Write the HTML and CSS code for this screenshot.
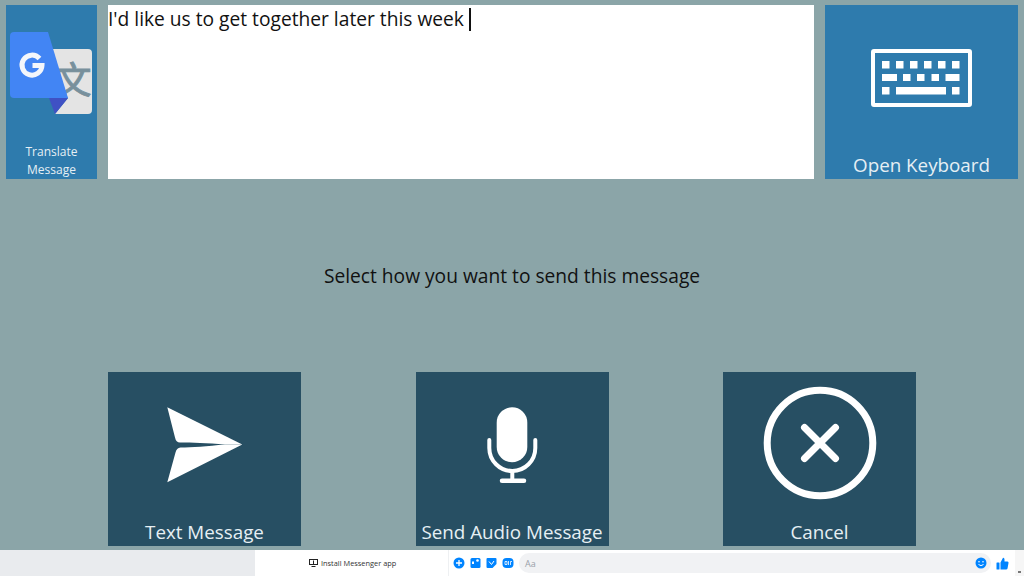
FILE: index.html
```html
<!DOCTYPE html>
<html lang="en">
<head>
<meta charset="utf-8">
<title>Send message</title>
<link rel="stylesheet" href="styles.css">
</head>
<body>
<main class="app">
  <section class="top">
    <div class="tile tile-blue tile-translate">
      <svg class="ic-translate" width="82" height="82" viewBox="0 0 82 82">
        <path d="M30 17H78Q82 17 82 21V78Q82 82 78 82H45L58 66Z" fill="#e4e4e4"/>
        <text class="wen" x="63" y="62" text-anchor="middle">文</text>
        <path d="M4 0H38L58 66H4Q0 66 0 62V4Q0 0 4 0Z" fill="#4285f4"/>
        <path d="M39 66H58L45 82Z" fill="#3f51c4"/>
        <path d="M29.500 26.500A10 10 0 1 0 32 33.500H22.500" fill="none" stroke="#f3f6fb" stroke-width="5"/>
      </svg>
      <span class="label label-small">Translate<br>Message</span>
    </div>
    <div class="message"><span class="message-text">I'd like us to get together later this week</span><span class="caret"></span></div>
    <div class="tile tile-blue tile-keyboard">
      <svg class="ic-keyboard" width="101" height="58" viewBox="0 0 101 58" fill="#fff">
        <rect x="2" y="2" width="97" height="54" rx="1" fill="none" stroke="#fff" stroke-width="4"/>
        <rect x="11" y="12" width="7.500" height="7.500"/><rect x="25" y="12" width="7.500" height="7.500"/><rect x="39" y="12" width="7.500" height="7.500"/><rect x="53" y="12" width="7.500" height="7.500"/><rect x="67" y="12" width="7.500" height="7.500"/><rect x="81" y="12" width="7.500" height="7.500"/>
        <rect x="11" y="25" width="15" height="7"/><rect x="32" y="25" width="7.500" height="7"/><rect x="46" y="25" width="7.500" height="7"/><rect x="60.500" y="25" width="7.500" height="7"/><rect x="74.500" y="25" width="14" height="7"/>
        <rect x="11" y="38" width="7.500" height="7.500"/><rect x="25" y="38" width="50" height="7.500"/><rect x="81" y="38" width="7.500" height="7.500"/>
      </svg>
      <span class="label">Open Keyboard</span>
    </div>
  </section>

  <p class="prompt">Select how you want to send this message</p>

  <section class="choices">
    <div class="tile tile-dark">
      <svg class="ic-send" width="76" height="76" viewBox="0 0 76 76" fill="#fff">
        <path d="M0.300 0.300L75.300 37.400H58C40 36 25 35.500 13 35.500Q9 35.500 8 30.500Z"/>
        <path d="M0.300 75.300L75.300 37.400H58C40 39 25 40.500 13.500 40.500Q9.500 41 8.500 45.500Z"/>
      </svg>
      <span class="label">Text Message</span>
    </div>
    <div class="tile tile-dark">
      <svg class="ic-mic" width="52" height="78" viewBox="0 0 52 78" fill="none" stroke="#fff" stroke-width="4" stroke-linecap="round">
        <rect x="10.700" y="1.300" width="30.600" height="55" rx="15.300" fill="#fff" stroke="none"/>
        <path d="M3.300 34V42A23 23 0 0 0 49.300 42V34"/>
        <path d="M26.300 65V74"/>
        <path d="M16 74.700H38" stroke-width="4.500"/>
      </svg>
      <span class="label">Send Audio Message</span>
    </div>
    <div class="tile tile-dark">
      <svg class="ic-cancel" width="114" height="114" viewBox="0 0 114 114" fill="none" stroke="#fff" stroke-linecap="round">
        <circle cx="57" cy="57" r="52.800" stroke-width="7"/>
        <path d="M41.500 41.500L72.500 72.500M72.500 41.500L41.500 72.500" stroke-width="7"/>
      </svg>
      <span class="label">Cancel</span>
    </div>
  </section>
</main>

<footer class="chatbar">
  <div class="chat-side"></div>
  <div class="chat-install">
    <svg width="9" height="8" viewBox="0 0 9 8" fill="none" stroke="#222"><rect x="0.500" y="0.500" width="8" height="5"/><path d="M2.500 7.500H6.500M4.500 1.500V5" /></svg>
    <span>Install Messenger app</span>
  </div>
  <div class="chat-compose">
    <svg class="tool" width="12" height="12" viewBox="0 0 12 12"><circle cx="6" cy="6" r="5.500" fill="#0084ff"/><path d="M6 3V9M3 6H9" stroke="#fff" stroke-width="1.300"/></svg>
    <svg class="tool" width="11" height="12" viewBox="0 0 11 12"><rect x="0.500" y="1" width="10" height="10" rx="1.500" fill="#0084ff"/><circle cx="7.500" cy="3.500" r="1.300" fill="#fff"/><path d="M2 4.500H4V7H2Z" fill="#fff"/></svg>
    <svg class="tool" width="11" height="12" viewBox="0 0 11 12"><path d="M1.500 1H9.500Q10.500 1 10.500 2V7L6.500 11H1.500Q0.500 11 0.500 10V2Q0.500 1 1.500 1Z" fill="#0084ff"/><path d="M3 4.500L5.500 7.500L8 4" stroke="#fff" fill="none"/></svg>
    <svg class="tool" width="12" height="12" viewBox="0 0 12 12"><rect x="0.500" y="1" width="11" height="10" rx="4" fill="#0084ff"/><path d="M3 4.500H5V7.500H3ZM6.500 4V8M8.500 8V4.500H10" stroke="#fff" fill="none" stroke-width="0.800"/></svg>
    <div class="pill">
      <span class="pill-hint">Aa</span>
      <svg width="12" height="12" viewBox="0 0 12 12"><circle cx="6" cy="6" r="5.500" fill="#0084ff"/><circle cx="4" cy="4.800" r="0.800" fill="#fff"/><circle cx="8" cy="4.800" r="0.800" fill="#fff"/><path d="M3.500 7.500Q6 9.800 8.500 7.500" stroke="#fff" fill="none"/></svg>
    </div>
    <svg class="thumb" width="13" height="13" viewBox="0 0 13 13" fill="#0084ff"><rect x="0.500" y="5.500" width="3" height="7" rx="0.500"/><path d="M4.500 5.500L7 0.700Q8.500 0.500 8.500 2.500V4.500H11.500Q12.800 4.500 12.500 6L11.500 11.500Q11.300 12.500 10 12.500H4.500Z"/></svg>
  </div>
  <div class="chat-scroll"><span class="scroll-mark"></span></div>
</footer>
</body>
</html>
```

FILE: styles.css
```css
* { box-sizing: border-box; }

html, body {
  margin: 0;
  padding: 0;
  height: 576px;
  overflow: hidden;
}

body {
  display: flex;
  flex-direction: column;
  font-family: "Open Sans", "Noto Sans", sans-serif;
  background: #8ba5a8;
}

.app {
  height: 550px;
  display: flex;
  flex-direction: column;
  background: #8ba5a8;
  padding-top: 5px;
}

.top {
  display: flex;
  gap: 11px;
  height: 174px;
  padding: 0 6px;
}

.tile {
  display: flex;
  flex-direction: column;
  align-items: center;
  width: 193px;
  height: 174px;
  color: #e6eff4;
  flex: none;
}

.tile-blue { background: #2e7bad; }
.tile-dark { background: #274f63; }

.tile-translate { width: 91px; }

.label {
  margin-top: auto;
  font-size: 18.8px;
  line-height: 26px;
  white-space: nowrap;
  padding-bottom: 1px;
}

.label-small {
  font-size: 12px;
  line-height: 18px;
  text-align: center;
  padding-bottom: 0;
}

.message {
  flex: 1;
  background: #fff;
  color: #111;
  font-size: 19.2px;
  line-height: 27px;
  white-space: nowrap;
}

.caret {
  display: inline-block;
  width: 2px;
  height: 23px;
  margin-left: 5px;
  background: #111;
  vertical-align: top;
  margin-top: 3px;
}

.wen {
  font-family: "Noto Sans CJK SC", sans-serif;
  font-size: 37px;
  fill: #78909c;
  stroke: #78909c;
  stroke-width: 0.8px;
}

.ic-translate { margin-top: 27px; margin-right: 1px; }
.ic-keyboard { margin-top: 44px; }
.ic-send { margin-top: 35px; margin-left: 1px; }
.ic-mic { margin-top: 34px; }
.ic-cancel { margin-top: 14px; }

.prompt {
  flex: 1;
  margin: 0;
  display: flex;
  align-items: center;
  justify-content: center;
  font-size: 19.2px;
  color: #111;
}

.choices {
  display: flex;
  justify-content: space-between;
  padding: 0 108px;
  margin-bottom: 4px;
}

.chatbar {
  height: 26px;
  display: flex;
  background: #fff;
  flex: none;
}

.chat-side {
  width: 255px;
  background: #e9ebee;
}

.chat-install {
  width: 194px;
  display: flex;
  align-items: center;
  gap: 3px;
  padding-left: 54px;
  font-size: 7.4px;
  color: #333;
  border-right: 1px solid #eef0f2;
}

.chat-compose {
  flex: 1;
  display: flex;
  align-items: center;
  padding-left: 4px;
  gap: 5px;
}

.tool { flex: none; }

.pill {
  width: 472px;
  height: 20px;
  padding: 0 4px 0 6px;
  border-radius: 10px;
  background: #f1f2f4;
  display: flex;
  align-items: center;
  justify-content: space-between;
  font-size: 9px;
  color: #99a0a8;
}

.thumb { margin-left: 0; }

.chat-scroll {
  width: 9px;
  background: #f6f6f6;
  display: flex;
  align-items: flex-end;
  justify-content: center;
  padding-bottom: 3px;
}

.scroll-mark {
  width: 3px;
  height: 2px;
  background: #777;
}
```
